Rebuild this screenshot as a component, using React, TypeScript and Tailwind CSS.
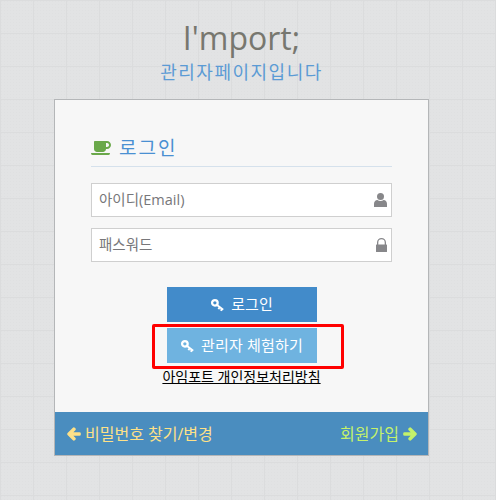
import { FaArrowLeft, FaArrowRight, FaCoffee } from "react-icons/fa";

const bodyFont = "font-['Open_Sans','Noto_Sans_CJK_KR',sans-serif]";

function KeyIcon() {
  return (
    <svg viewBox="0 0 16 16" className="w-[15px] h-[14px]" fill="none" stroke="currentColor">
      <circle cx="5" cy="5.500" r="3.200" strokeWidth="2.600" />
      <path d="M7.500 8l7 5.500M10.500 10.500l-1.500 2.200M13 12.500l-1.200 2" strokeWidth="2.200" />
    </svg>
  );
}

function UserIcon() {
  return (
    <svg viewBox="0 0 13 14" className="w-[13px] h-[14px] fill-[#87878a]">
      <circle cx="6.500" cy="3.500" r="3.500" />
      <path d="M0 14v-3.200C0 8.600 1.600 7 3.400 7c.9.7 1.900 1.100 3.100 1.100S8.700 7.700 9.600 7C11.400 7 13 8.600 13 10.800V14z" />
    </svg>
  );
}

function LockIcon() {
  return (
    <svg viewBox="0 0 11 14" className="w-[11px] h-[14px] fill-[#87878a]">
      <path d="M1 7V4.500a4.500 4.500 0 0 1 9 0V7H8.700V4.500a3.200 3.200 0 0 0-6.400 0V7z" />
      <rect x="0" y="6.500" width="11" height="7.500" rx="0.500" />
    </svg>
  );
}

function App() {
  return (
    <div
      className={`${bodyFont} w-[496px] h-[500px] overflow-hidden bg-[#e2e3e4] bg-[linear-gradient(#dbdcdd_1px,transparent_1px),linear-gradient(90deg,#dbdcdd_1px,transparent_1px),radial-gradient(#dfe0e1_1px,transparent_1px)] bg-[size:33px_33px,33px_33px,3px_3px]`}
    >
      <div className="w-[375px] ml-[54px]">
        {/* Title */}
        <div className="h-[99px] pt-[13px] text-center">
          <h1 className="text-[32px] leading-[50px] text-[#77776f]">I'mport;</h1>
          <p className="text-[18px] leading-[18px] tracking-[1.500px] text-[#5b9bd5]">관리자페이지입니다</p>
        </div>

        {/* Login card */}
        <div className="relative h-[357px] border border-[#b4b6b8] bg-[#f7f7f7] flex flex-col">
          <div className="flex-1 px-[36px] pt-[31px]">
            <div className="h-[36px] flex items-center gap-[8px] border-b border-[#d5e1ec] pb-[1px]">
              <FaCoffee className="w-[20px] h-[18px] text-[#6aa84a]" />
              <span className="text-[19px] tracking-[2px] text-[#4a90d2]">로그인</span>
            </div>

            <div className="mt-[16px] h-[34px] flex items-center justify-between border border-[#cfcfcf] bg-white pl-[7px] pr-[4px]">
              <span className="text-[14.500px] text-[#77777a]">아이디(Email)</span>
              <UserIcon />
            </div>
            <div className="mt-[11px] h-[34px] flex items-center justify-between border border-[#cfcfcf] bg-white pl-[7px] pr-[4px]">
              <span className="text-[14.500px] text-[#77777a]">패스워드</span>
              <LockIcon />
            </div>

            <div className="mt-[25px] flex flex-col items-center">
              <button className="w-[150px] h-[35px] flex items-center justify-center gap-[6px] bg-[#428bca] text-white text-[15px]">
                <KeyIcon />
                로그인
              </button>
              <button className="mt-[6px] w-[150px] h-[35px] flex items-center justify-center gap-[6px] bg-[#6fb3e0] text-white text-[15px] tracking-[0.200px]">
                <KeyIcon />
                관리자 체험하기
              </button>
              <a className="mt-[5px] text-[14px] leading-[18px] text-black underline">아임포트 개인정보처리방침</a>
            </div>
          </div>

          {/* Red highlight box */}
          <div className="absolute left-[97px] top-[224px] w-[192px] h-[45px] border-[3px] border-[#ff0000] rounded-[2px]" />

          {/* Footer */}
          <div className="h-[43px] flex items-center justify-between bg-[#4a8dbf] pl-[12px] pr-[11px] text-[16px]">
            <div className="flex items-center gap-[4px] text-[#fee188]">
              <FaArrowLeft className="w-[14px] h-[14px] stroke-[50]" />
              비밀번호 찾기/변경
            </div>
            <div className="flex items-center gap-[4px] text-[#c5f26a]">
              회원가입
              <FaArrowRight className="w-[14px] h-[14px] stroke-[50]" />
            </div>
          </div>
        </div>
      </div>
    </div>
  );
}

export default App;
